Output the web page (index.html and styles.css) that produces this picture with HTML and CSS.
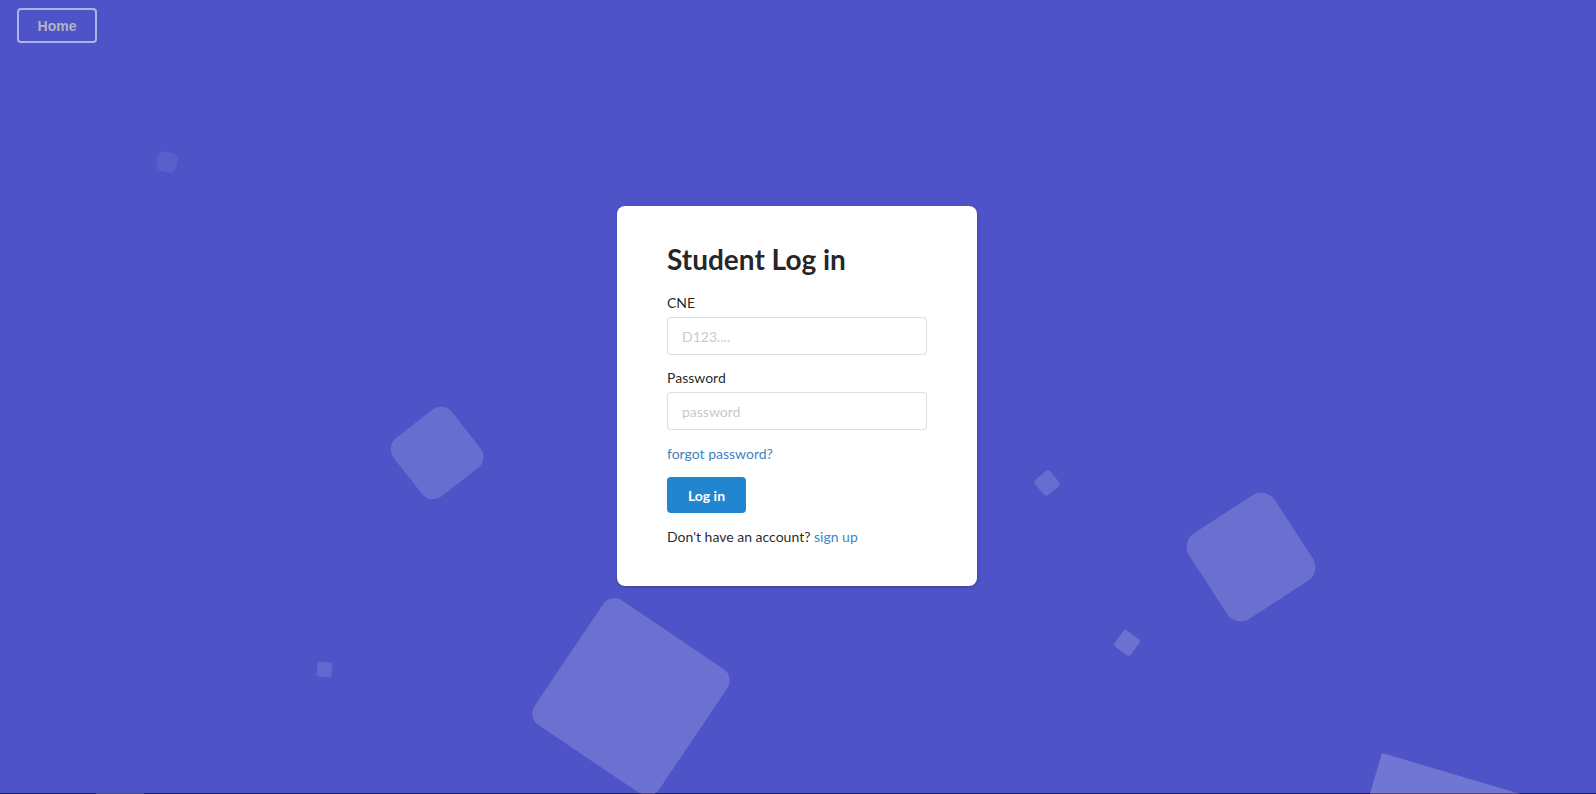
FILE: index.html
```html
<!DOCTYPE html>
<html lang="en">
<head>
<meta charset="utf-8">
<title>Student Log in</title>
<link rel="stylesheet" href="styles.css">
</head>
<body>
<div class="area"></div>
<ul class="squares">
  <li class="sq sq1"></li>
  <li class="sq sq2"></li>
  <li class="sq sq3"></li>
  <li class="sq sq4"></li>
  <li class="sq sq5"></li>
  <li class="sq sq6"></li>
  <li class="sq sq7"></li>
  <li class="sq sq8"></li>
  <li class="sq sq9"></li>
</ul>
<header class="topbar">
  <a class="home-btn" href="#">Home</a>
</header>
<main class="page">
  <form class="card">
    <h1 class="title">Student Log in</h1>
    <div class="field">
      <label class="label">CNE</label>
      <input class="input" type="text" placeholder="D123....">
    </div>
    <div class="field">
      <label class="label">Password</label>
      <input class="input" type="password" placeholder="password">
    </div>
    <a class="link forgot" href="#">forgot password?</a>
    <button class="btn" type="button">Log in</button>
    <p class="signup">Don't have an account? <a class="link" href="#">sign up</a></p>
  </form>
</main>
</body>
</html>
```

FILE: styles.css
```css
* { box-sizing: border-box; }

html, body {
  margin: 0;
  padding: 0;
  width: 100%;
  height: 100%;
  overflow: hidden;
}

body {
  background: #25215a;
  font-family: Lato, "Helvetica Neue", Arial, sans-serif;
  font-size: 14px;
  color: rgba(0, 0, 0, 0.87);
  position: relative;
}

.area {
  position: absolute;
  left: 0;
  top: 0;
  width: 100%;
  height: calc(100% - 1px);
  background: #4e54c8;
}

.squares {
  position: absolute;
  left: 0;
  top: 0;
  width: 100%;
  height: 100%;
  overflow: hidden;
  margin: 0;
  padding: 0;
  list-style: none;
}

.sq {
  position: absolute;
  display: block;
  background: rgba(255, 255, 255, 0.17);
}

.sq1 { left: 157px; top: 152px; width: 20px; height: 20px; border-radius: 7px; transform: rotate(10deg); background: rgba(255,255,255,0.07); }
.sq2 { left: 400px; top: 416px; width: 74px; height: 74px; border-radius: 14px; transform: rotate(-38deg); background: rgba(255,255,255,0.15); }
.sq3 { left: 556px; top: 622px; width: 150px; height: 150px; border-radius: 14px; transform: rotate(34deg); }
.sq4 { left: 1200px; top: 506px; width: 102px; height: 102px; border-radius: 16px; transform: rotate(-33deg); background: rgba(255,255,255,0.16); }
.sq5 { left: 1037px; top: 473px; width: 20px; height: 20px; border-radius: 4px; transform: rotate(-40deg); background: rgba(255,255,255,0.15); }
.sq6 { left: 1117px; top: 633px; width: 20px; height: 20px; border-radius: 3px; transform: rotate(36deg); background: rgba(255,255,255,0.17); }
.sq7 { left: 317px; top: 662px; width: 15px; height: 15px; border-radius: 2px; transform: rotate(6deg); background: rgba(255,255,255,0.12); }
.sq8 { left: 1382px; top: 753px; width: 180px; height: 180px; border-radius: 2px; transform-origin: 0 0; transform: rotate(16.5deg); background: rgba(255,255,255,0.2); }
.sq9 { left: 96px; top: 793px; width: 48px; height: 48px; background: rgba(255,255,255,0.2); }

.topbar {
  position: relative;
  z-index: 2;
  padding: 8px 0 0 17px;
}

.home-btn {
  display: inline-flex;
  align-items: center;
  justify-content: center;
  width: 80px;
  height: 35px;
  border: 2px solid rgba(255, 255, 255, 0.55);
  border-radius: 4px;
  color: #b3b3c6;
  font-family: "Liberation Sans", Arial, sans-serif;
  font-weight: 700;
  font-size: 14px;
  text-decoration: none;
}

.page {
  position: absolute;
  z-index: 1;
  inset: 0;
  display: flex;
  align-items: center;
  justify-content: center;
}

.card {
  width: 360px;
  height: 380px;
  margin: -2px 0 0 -2px;
  background: #fff;
  border-radius: 8px;
  box-shadow: 0 1px 3px rgba(0, 0, 0, 0.25);
  padding: 35px 50px 0 50px;
  display: flex;
  flex-direction: column;
  align-items: flex-start;
}

.title {
  margin: 0 0 17px 0;
  font-size: 28px;
  line-height: 36px;
  font-weight: 700;
  color: rgba(0, 0, 0, 0.87);
}

.field {
  width: 100%;
  margin-bottom: 14px;
}

.label {
  display: block;
  font-size: 14px;
  line-height: 17px;
  margin-bottom: 6px;
  color: rgba(0, 0, 0, 0.87);
}

.input {
  display: block;
  width: 100%;
  height: 38px;
  padding: 0 14px;
  border: 1px solid rgba(34, 36, 38, 0.15);
  border-radius: 4px;
  font-family: Lato, "Helvetica Neue", Arial, sans-serif;
  font-size: 14px;
  color: rgba(0, 0, 0, 0.87);
  outline: none;
}

.input::placeholder {
  color: rgba(191, 191, 191, 0.87);
}

.link {
  color: #4183c4;
  text-decoration: none;
}

.forgot {
  display: block;
  line-height: 17px;
  margin-top: 1px;
  margin-bottom: 15px;
}

.btn {
  width: 79px;
  height: 36px;
  border: 0;
  border-radius: 4px;
  background: #2185d0;
  color: #fff;
  font-family: Lato, "Helvetica Neue", Arial, sans-serif;
  font-weight: 700;
  font-size: 14px;
  cursor: pointer;
}

.signup {
  margin: 15px 0 0 0;
  line-height: 17px;
}
```
